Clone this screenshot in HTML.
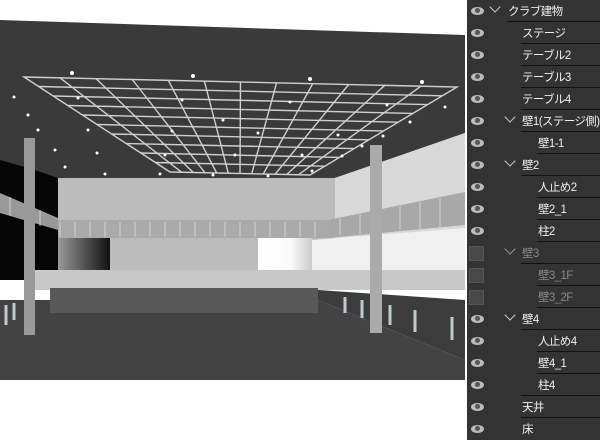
<!DOCTYPE html>
<html><head><meta charset="utf-8"><style>
body{margin:0;width:600px;height:440px;background:#fff;overflow:hidden;position:relative;font-family:"Liberation Sans","Noto Sans CJK JP",sans-serif}
#p{position:absolute;left:467px;top:0;width:133px;height:440px;background:#333}
.r{position:absolute;left:0;width:133px;height:22px}
.e{position:absolute;left:4px;top:7px;width:13px;height:8px;border-radius:50%;background:#bbb}
.e:after{content:"";position:absolute;left:4px;top:1px;width:5px;height:5px;border-radius:50%;background:#555}
.b{position:absolute;left:2px;top:4px;width:13px;height:13px;background:#484848;border:1px solid #555}
.t{position:absolute;top:3px;font-size:11.5px;letter-spacing:-0.6px;color:#eee;white-space:nowrap}
.l{position:absolute;bottom:0;right:0;height:1px;background:#111}
.c{position:absolute;top:5px;width:7px;height:7px;border-right:1.5px solid #ccc;border-bottom:1.5px solid #ccc;transform:rotate(45deg)}
.g .t{color:#888}
</style></head><body>
<svg width="467" height="440" style="position:absolute;left:0;top:0">
<defs><linearGradient id="gr" x1="0" x2="1"><stop offset="0" stop-color="#999"/><stop offset="1" stop-color="#111"/></linearGradient>
<linearGradient id="gw" x1="0" x2="1"><stop offset="0" stop-color="#fff"/><stop offset="0.6" stop-color="#fafafa"/><stop offset="1" stop-color="#ccc"/></linearGradient></defs>
<rect x="0" y="0" width="467" height="440" fill="#fff"/>
<polygon points="0,20 465,35 465,133 335,178 35,178 0,160" fill="#3a3a3a"/>
<rect x="35" y="178" width="300" height="112" fill="#bcbcbc"/>
<polygon points="335,178 465,133 465,280 335,270" fill="#d8d8d8"/>
<polygon points="312,240 465,228 465,280 312,270" fill="#f0f0f0"/>
<polygon points="0,160 35,170 58,178 58,270 0,280" fill="#050505"/>
<rect x="58" y="237" width="52" height="33" fill="url(#gr)"/>
<rect x="258" y="237" width="54" height="33" fill="url(#gw)"/>
<rect x="35" y="270" width="430" height="20" fill="#c8c8c8"/>
<rect x="0" y="270" width="35" height="10" fill="#050505"/>
<polygon points="0,300 50,300 50,313 318,313 318,300 465,360 465,380 0,380" fill="#434343"/>
<polygon points="318,290 465,300 465,360 318,300" fill="#3c3c3c"/>
<rect x="50" y="288" width="268" height="25" fill="#585858"/>
<polygon points="0,193 58,218 58,230 0,213" fill="#999"/>
<rect x="58" y="220" width="270" height="18" fill="#aaa"/>
<polygon points="328,220 465,192 465,225 328,238" fill="#a8a8a8"/>
<g stroke="#ddd" stroke-width="0.8">
<path d="M60,222V237M75,222V237M90,222V237M105,222V237M120,222V237M135,222V237M150,222V237M165,222V237M180,222V237M195,222V237M210,222V237M225,222V237M240,222V237M255,222V237M270,222V237M285,222V237M300,222V237M315,222V237M340,218V235M360,214V234M380,210V232M400,206V230M420,202V229M440,198V227M10,197V216M25,203V222M40,210V226"/>
</g>
<rect x="24" y="138" width="11" height="197" fill="#999"/>
<rect x="370" y="145" width="12" height="188" fill="#aaa"/>
<g stroke="#bcc" stroke-width="3">
<path d="M345,297V313M362,300V318M390,305V325M415,310V332M452,317V340M6,305V325M14,303V320"/>
</g>
<g fill="none" stroke="#d0d0d0" stroke-width="1.4">
<path d="M24,77L457,87L310,175L170,172Z"/>
<path d="M38.6,86.5L442.3,95.8M53.2,96L427.6,104.6M67.8,105.5L412.9,113.4M82.4,115L398.2,122.2M97,124.5L383.5,131M111.6,134L368.8,139.8M126.2,143.5L354.1,148.6M140.8,153L339.4,157.4M155.4,162.5L324.7,166.2"/>
<path d="M60,77.8L181.7,172.3M96.2,78.7L193.3,172.5M132.3,79.5L205,172.8M168.3,80.3L216.7,173M204.4,81.2L228.3,173.3M240.5,82L240,173.5M276.6,82.8L251.7,173.8M312.7,83.7L263.3,174M348.7,84.5L275,174.3M384.8,85.3L286.7,174.5M420.9,86.2L298.3,174.8"/>
</g>
<g fill="#fff">
<circle cx="72" cy="73" r="2"/><circle cx="193" cy="76" r="2"/><circle cx="310" cy="79" r="2"/><circle cx="422" cy="82" r="2"/>
<circle cx="14" cy="97" r="1.5"/><circle cx="28" cy="115" r="1.5"/><circle cx="38" cy="130" r="1.5"/><circle cx="78" cy="98" r="1.5"/><circle cx="182" cy="100" r="1.5"/><circle cx="290" cy="102" r="1.5"/><circle cx="387" cy="105" r="1.5"/><circle cx="445" cy="107" r="1.5"/>
<circle cx="88" cy="130" r="1.5"/><circle cx="172" cy="131" r="1.5"/><circle cx="223" cy="120" r="1.5"/><circle cx="258" cy="133" r="1.5"/><circle cx="338" cy="135" r="1.5"/><circle cx="410" cy="122" r="1.5"/><circle cx="383" cy="136" r="1.5"/>
<circle cx="55" cy="150" r="1.5"/><circle cx="97" cy="153" r="1.5"/><circle cx="165" cy="155" r="1.5"/><circle cx="235" cy="155" r="1.5"/><circle cx="302" cy="155" r="1.5"/><circle cx="362" cy="146" r="1.5"/><circle cx="342" cy="156" r="1.5"/>
<circle cx="65" cy="167" r="1.5"/><circle cx="105" cy="174" r="1.5"/><circle cx="160" cy="174" r="1.5"/><circle cx="213" cy="175" r="1.5"/><circle cx="268" cy="176" r="1.5"/><circle cx="312" cy="171" r="1.5"/>
</g>
</svg>
<div id="p">
<div class="r" style="top:0"><div class="e"></div><div class="c" style="left:24px;top:3px"></div><div class="t" style="left:41px">クラブ建物</div><div class="l" style="left:40px"></div></div>
<div class="r" style="top:22px"><div class="e"></div><div class="t" style="left:55px">ステージ</div><div class="l" style="left:54px"></div></div>
<div class="r" style="top:44px"><div class="e"></div><div class="t" style="left:55px">テーブル2</div><div class="l" style="left:54px"></div></div>
<div class="r" style="top:66px"><div class="e"></div><div class="t" style="left:55px">テーブル3</div><div class="l" style="left:54px"></div></div>
<div class="r" style="top:88px"><div class="e"></div><div class="t" style="left:55px">テーブル4</div><div class="l" style="left:54px"></div></div>
<div class="r" style="top:110px"><div class="e"></div><div class="c" style="left:39px;top:3px"></div><div class="t" style="left:55px">壁1(ステージ側)</div><div class="l" style="left:54px"></div></div>
<div class="r" style="top:132px"><div class="e"></div><div class="t" style="left:71px">壁1-1</div><div class="l" style="left:70px"></div></div>
<div class="r" style="top:154px"><div class="e"></div><div class="c" style="left:39px;top:3px"></div><div class="t" style="left:55px">壁2</div><div class="l" style="left:54px"></div></div>
<div class="r" style="top:176px"><div class="e"></div><div class="t" style="left:71px">人止め2</div><div class="l" style="left:70px"></div></div>
<div class="r" style="top:198px"><div class="e"></div><div class="t" style="left:71px">壁2_1</div><div class="l" style="left:70px"></div></div>
<div class="r" style="top:220px"><div class="e"></div><div class="t" style="left:71px">柱2</div><div class="l" style="left:70px"></div></div>
<div class="r g" style="top:242px"><div class="b"></div><div class="c" style="left:39px;top:3px;border-color:#999"></div><div class="t" style="left:55px">壁3</div><div class="l" style="left:54px"></div></div>
<div class="r g" style="top:264px"><div class="b"></div><div class="t" style="left:71px">壁3_1F</div><div class="l" style="left:70px"></div></div>
<div class="r g" style="top:286px"><div class="b"></div><div class="t" style="left:71px">壁3_2F</div><div class="l" style="left:70px"></div></div>
<div class="r" style="top:308px"><div class="e"></div><div class="c" style="left:39px;top:3px"></div><div class="t" style="left:55px">壁4</div><div class="l" style="left:54px"></div></div>
<div class="r" style="top:330px"><div class="e"></div><div class="t" style="left:71px">人止め4</div><div class="l" style="left:70px"></div></div>
<div class="r" style="top:352px"><div class="e"></div><div class="t" style="left:71px">壁4_1</div><div class="l" style="left:70px"></div></div>
<div class="r" style="top:374px"><div class="e"></div><div class="t" style="left:71px">柱4</div><div class="l" style="left:54px"></div></div>
<div class="r" style="top:396px"><div class="e"></div><div class="t" style="left:55px">天井</div><div class="l" style="left:54px"></div></div>
<div class="r" style="top:418px"><div class="e"></div><div class="t" style="left:55px">床</div></div>
</div>
</body></html>
